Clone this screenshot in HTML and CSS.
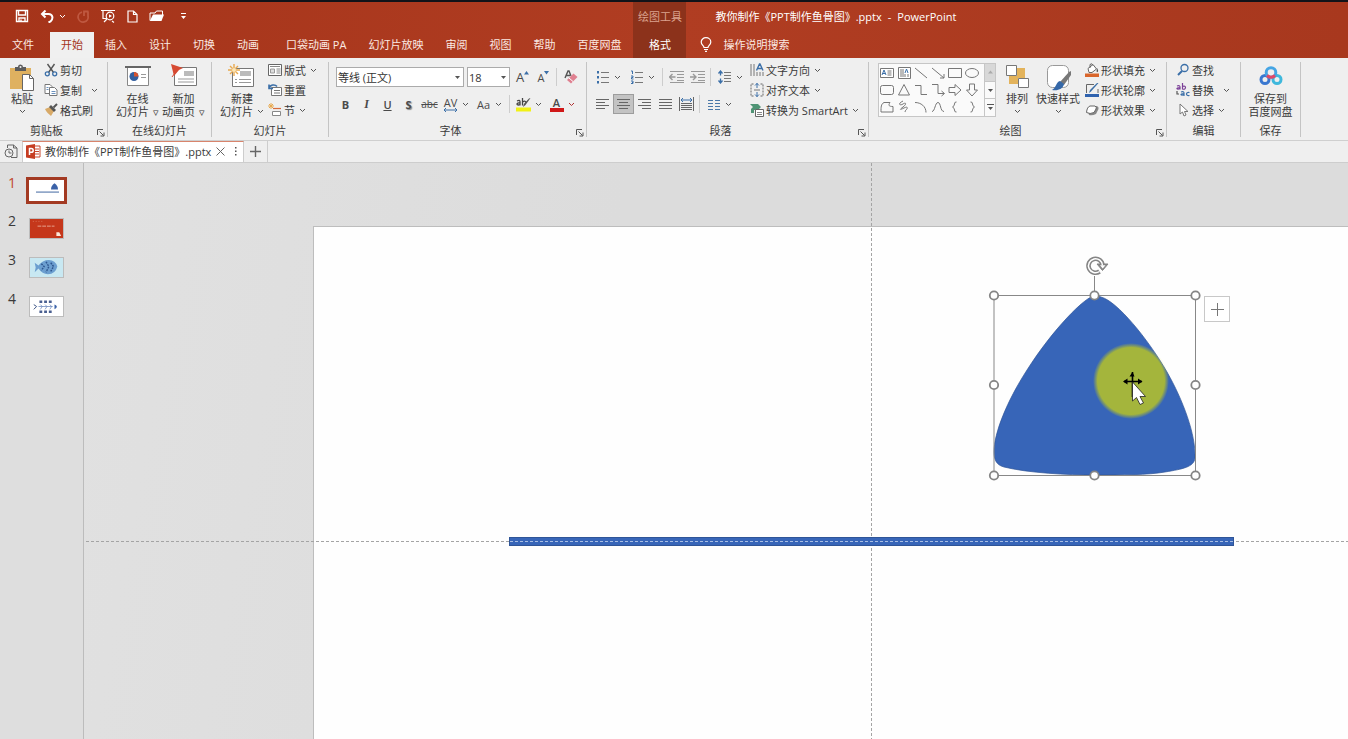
FILE: index.html
```html
<!DOCTYPE html>
<html lang="zh-CN">
<head>
<meta charset="utf-8">
<title>教你制作《PPT制作鱼骨图》.pptx - PowerPoint</title>
<link rel="stylesheet" href="styles.css">
</head>
<body>
<svg class="defs" aria-hidden="true">
  <symbol id="chev" viewBox="0 0 7 5"><path d="M1 1l2.500 2.500L6 1" fill="none" stroke="currentColor"/></symbol>
  <symbol id="tri" viewBox="0 0 7 5"><path d="M1 1h5L3.500 4z" fill="#555"/></symbol>
  <symbol id="launch" viewBox="0 0 9 9"><path d="M1.500 7V1.500H7M3.500 3.500l4 4M8 4.500V8H4.500" fill="none" stroke="#555"/></symbol>
</svg>
<header class="header">
  <div class="qat">
    <button aria-label="保存"><svg width="14" height="14" viewBox="0 0 14 14" fill="none" stroke="#fff" stroke-width="1.400"><path d="M1.500 1.500h11v11h-11zM3.500 1.500v4.500h7V1.500M4 12.500V9h6v3.500M6 12.500v-2"/></svg></button>
    <button aria-label="撤消" class="undo"><svg width="14" height="13" viewBox="0 0 14 13" fill="none" stroke="#fff" stroke-width="2"><path d="M5.500 0.500L2 4L5.500 7.500M2 4h6.500c4.500 0 5 5 2 7.500L8.500 12.500"/></svg><svg class="chev"><use href="#chev"/></svg></button>
    <button aria-label="重做" class="dim"><svg width="13" height="13" viewBox="0 0 13 13" fill="none" stroke="#d0705a" stroke-width="1.800"><path d="M5 2.200A5 5 0 1 0 11 6V1.500M11.500 1.500H7V6"/></svg></button>
    <button aria-label="从头开始"><svg width="15" height="14" viewBox="0 0 15 14" fill="none" stroke="#fff" stroke-width="1.200"><path d="M0 1.500h14M2 1.500v8h4M3 13l3-3M11 12l2 1.500"/><circle cx="9" cy="7" r="3.800"/><path d="M8 5.200v3.600L11 7z" fill="#fff" stroke="none"/></svg></button>
    <button aria-label="新建"><svg width="11" height="13" viewBox="0 0 11 13" fill="none" stroke="#fff" stroke-width="1.200"><path d="M1 1h5.500L10 4.500V12H1zM6.500 1v3.500H10"/></svg></button>
    <button aria-label="打开"><svg width="15" height="12" viewBox="0 0 15 12" fill="#fff"><path d="M1 10.500V3h5l1.500-2h6v4" fill="none" stroke="#fff"/><path d="M4 4.500h11L12.500 11H0.800z"/></svg></button>
    <button aria-label="自定义快速访问工具栏"><svg width="7" height="7" viewBox="0 0 7 7" fill="#fff"><path d="M1 0h5v1H1zM1 3h5L3.500 6z"/></svg></button>
  </div>
  <nav class="tabs">
    <button class="file">文件</button><button class="on">开始</button><button>插入</button><button>设计</button><button>切换</button><button>动画</button><button class="addin">口袋动画 PA</button><button>幻灯片放映</button><button>审阅</button><button>视图</button><button>帮助</button><button>百度网盘</button>
  </nav>
  <div class="context"><span>绘图工具</span><button>格式</button></div>
  <h1 class="title"><span>教你制作《PPT制作鱼骨图》.pptx</span><span>-</span><span>PowerPoint</span></h1>
  <button class="tellme"><svg width="12" height="15" viewBox="0 0 12 15" fill="none" stroke="#fff" stroke-width="1.200"><path d="M4 10.500C4 8.500 1.200 8 1.200 5a4.800 4.300 0 0 1 9.600 0C10.800 8 8 8.500 8 10.500zM4 12.500h4M5 14.300h2"/></svg>操作说明搜索</button>
</header>

<main class="ribbon">
  <section class="group clip">
    <div class="body">
      <button class="big paste"><svg width="26" height="28" viewBox="0 0 26 28"><rect x="1" y="4" width="21" height="21" fill="#dfb160"/><path d="M6 3h3a2.500 2.500 0 0 1 5 0h3v4H6z" fill="#5c5c5c"/><circle cx="11.500" cy="3" r="1" fill="#eee"/><path d="M13.500 10.500h7l4 4v12h-11z" fill="#fff" stroke="#666"/><path d="M20.500 10.500v4h4" fill="none" stroke="#666"/></svg><span>粘贴</span><svg class="chev"><use href="#chev"/></svg></button>
      <div class="stack">
        <button><svg width="14" height="14" viewBox="0 0 14 14" fill="none"><path d="M3.500 1l6 8.500M10.500 1l-6 8.500" stroke="#555" stroke-width="1.400"/><circle cx="3.300" cy="10.800" r="2" stroke="#3b6fa8" stroke-width="1.300"/><circle cx="10.700" cy="10.800" r="2" stroke="#3b6fa8" stroke-width="1.300"/></svg>剪切</button>
        <button class="wide"><svg width="14" height="14" viewBox="0 0 14 14" fill="#fff" stroke="#777"><path d="M1 1.500h5l2 2v7H1z"/><path d="M5.500 4.500h5l2.500 2.500v5.500h-7.500z"/><path d="M2.500 4.500h2M2.500 6.500h2M7.500 8.500h4M7.500 10.500h4" stroke="#6a90bd"/></svg>复制<svg class="chev"><use href="#chev"/></svg></button>
        <button><svg width="14" height="14" viewBox="0 0 14 14"><path d="M1 6l5-2 4 4-3 5C5 11 2 9 1 6z" fill="#d8aa68"/><path d="M5 4l2-2 5 5-2 2z" fill="#555"/><path d="M9.500 4.500L13 1" stroke="#555" stroke-width="2"/></svg>格式刷</button>
      </div>
    </div>
    <footer><span>剪贴板</span><button class="launch" aria-label="剪贴板选项"><svg width="9" height="9"><use href="#launch"/></svg></button></footer>
  </section>

  <section class="group online">
    <div class="body">
      <button class="big"><svg width="28" height="28" viewBox="0 0 28 28"><path d="M1 3h26" stroke="#666" stroke-width="2"/><path d="M3.500 4v17.500h21V4" fill="#fff" stroke="#888"/><circle cx="10" cy="12.500" r="4.500" fill="#345f9f"/><path d="M10 8v4.500h4.500A4.500 4.500 0 0 0 10 8" fill="#d9552f"/><path d="M17 10.500h5M17 13.500h5" stroke="#999"/></svg><span>在线</span><span>幻灯片 <i>▿</i></span></button>
      <button class="big"><svg width="28" height="28" viewBox="0 0 28 28"><path d="M4.500 3.500h22v18h-22z" fill="#fff" stroke="#777"/><path d="M14 7h10v5H14z" fill="#bbb"/><path d="M8 15h16M8 18h16" stroke="#999"/><path d="M1 0l12 4-4 2-5 6z" fill="#d64a32"/><path d="M5 9l-3 4" stroke="#d64a32"/></svg><span>新加</span><span>动画页 <i>▿</i></span></button>
    </div>
    <footer><span>在线幻灯片</span></footer>
  </section>

  <section class="group slides">
    <div class="body">
      <button class="big"><svg width="28" height="28" viewBox="0 0 28 28"><path d="M4.500 4.500h21v18h-21z" fill="#fff" stroke="#777"/><path d="M12 7h11v5H12z" fill="#bbb"/><path d="M7 15.500h2m2 0h12M7 18.500h2m2 0h12" stroke="#999"/><path d="M6 0v12M0 6h12M2 2l8 8M10 2l-8 8" stroke="#e8a94e" stroke-width="1.400"/><circle cx="6" cy="6" r="2" fill="#fbe6b8"/></svg><span>新建</span><span>幻灯片 <svg class="chev"><use href="#chev"/></svg></span></button>
      <div class="stack">
        <button><svg width="14" height="14" viewBox="0 0 14 14" fill="#fff" stroke="#666"><path d="M0.500 1.500h13v11H0.500z"/><path d="M2 3.500h10M8.500 6h4M8.500 8h4M8.500 10h4" stroke="#888"/><path d="M2.500 6h4v4h-4z" fill="#ddd" stroke="#999"/></svg>版式<svg class="chev"><use href="#chev"/></svg></button>
        <button><svg width="14" height="14" viewBox="0 0 14 14" fill="#fff" stroke="#777"><path d="M3.500 4.500h10v8h-10z"/><path d="M6 7.500h6M6 10h6"/><path d="M1 5.500C2 1.500 7 1 9 3.500M1 1.500v4h4" fill="none" stroke="#3b6fa8" stroke-width="1.600"/></svg>重置</button>
        <button><svg width="14" height="14" viewBox="0 0 14 14" fill="#fff" stroke="#888"><path d="M4.500 8.500h8v4h-8z"/><path d="M5 5.500h8" stroke="#d66a3a" stroke-width="1.200"/><path d="M3 0v6M0 3h6M1 1l4 4M5 1L1 5" stroke="#e8a94e"/></svg>节<svg class="chev"><use href="#chev"/></svg></button>
      </div>
    </div>
    <footer><span>幻灯片</span></footer>
  </section>

  <section class="group font">
    <div class="rows">
      <div class="row combos">
        <div class="combo name"><select aria-label="字体"><option>等线 (正文)</option></select><svg width="7" height="5"><use href="#tri"/></svg></div>
        <div class="combo size"><select aria-label="字号"><option>18</option></select><svg width="7" height="5"><use href="#tri"/></svg></div>
        <button class="tool grow" aria-label="增大字号"><b>A</b><svg width="5" height="4" viewBox="0 0 5 4"><path d="M0 3.500L2.500 0 5 3.500z" fill="#3b6fa8"/></svg></button>
        <button class="tool shrink" aria-label="减小字号"><b>A</b><svg width="5" height="4" viewBox="0 0 5 4"><path d="M0 0h5L2.500 3.500z" fill="#3b6fa8"/></svg></button>
        <i class="sep"></i>
        <button class="tool" aria-label="清除所有格式"><svg width="14" height="15" viewBox="0 0 14 15"><path d="M1 8l3-7h1l2 5M2.500 5.500H6" fill="none" stroke="#555" stroke-width="1.400"/><path d="M3 10L9.500 3.500l4 3.500-6.500 6.500z" fill="#df8090"/><path d="M5 8l4 3.500" stroke="#fff"/></svg></button>
      </div>
      <div class="row">
        <button class="tool"><b>B</b></button><button class="tool italic"><em>I</em></button><button class="tool under"><u>U</u></button><button class="tool shadow">S</button><button class="tool strike">abc</button>
        <button class="tool" aria-label="字符间距"><svg class="ic" width="15" height="4" viewBox="0 0 15 4"><path d="M1 2h13M3 0L1 2l2 2M12 0l2 2-2 2" fill="none" stroke="#3b6fa8"/></svg><span class="av">AV</span></button><button class="drop" aria-label="字符间距选项"><svg class="chev"><use href="#chev"/></svg></button>
        <button class="tool next aa">Aa</button><button class="drop" aria-label="更改大小写选项"><svg class="chev"><use href="#chev"/></svg></button>
        <i class="sep near"></i>
        <button class="tool" aria-label="突出显示"><svg width="15" height="15" viewBox="0 0 15 15"><path d="M0 10.500h15V14.500H0z" fill="#f1f116"/><path d="M1 4q3-1.500 3 .8V8.500M4 6C0 5.200 0 9.200 4 7.600M6.500 1v7.500M6.500 5q3.500-2 3.500 1" fill="none" stroke="#444" stroke-width="1.300"/><path d="M14.500 1L9.500 8l-2.500 2 .8-3L13 1.500z" fill="#555"/></svg></button><button class="drop" aria-label="突出显示颜色"><svg class="chev"><use href="#chev"/></svg></button>
        <button class="tool next color"><b>A</b></button><button class="drop red" aria-label="字体颜色选项"><svg class="chev"><use href="#chev"/></svg></button>
      </div>
    </div>
    <footer><span>字体</span><button class="launch" aria-label="字体选项"><svg width="9" height="9"><use href="#launch"/></svg></button></footer>
  </section>

  <section class="group para">
    <div class="body">
      <div class="rows">
        <div class="row">
          <button class="tool" aria-label="项目符号"><svg width="12" height="14" viewBox="0 0 12 14"><path d="M4 2.500h8M4 7.500h8M4 12.500h8" stroke="#777"/><path d="M0 1h2v2.500H0zM0 6h2v2.500H0zM0 11h2v2.500H0z" fill="#3b6fa8"/></svg></button><button class="drop" aria-label="项目符号选项"><svg class="chev"><use href="#chev"/></svg></button>
          <button class="tool next" aria-label="编号"><svg width="12" height="14" viewBox="0 0 12 14" fill="none"><path d="M4 2.500h8M4 7.500h8M4 12.500h8" stroke="#777"/><path d="M0 1h1.500v3M0 6h2v1.500H0.500V9h2M0 11h2v2.500H0M1 12.500h1" stroke="#3b6fa8"/></svg></button><button class="drop" aria-label="编号选项"><svg class="chev"><use href="#chev"/></svg></button>
          <i class="sep"></i>
          <button class="tool" aria-label="降低列表级别"><svg width="15" height="12" viewBox="0 0 15 12" fill="none" stroke="#999"><path d="M1 0.500h14M8 3.500h7M8 6.500h7M8 9.500h7M1 11.500h14"/><path d="M0.500 6h6M3.500 3l-3 3 3 3" stroke-width="1.400"/></svg></button>
          <button class="tool" aria-label="提高列表级别"><svg width="15" height="12" viewBox="0 0 15 12" fill="none" stroke="#999"><path d="M1 0.500h14M8 3.500h7M8 6.500h7M8 9.500h7M1 11.500h14"/><path d="M0 6h6M3 3l3 3-3 3" stroke-width="1.400"/></svg></button>
          <i class="sep tight"></i>
          <button class="tool" aria-label="行距"><svg width="13" height="14" viewBox="0 0 13 14" fill="none"><path d="M6 2.500h7M6 5.500h7M6 8.500h7M6 11.500h7" stroke="#777"/><path d="M2.500 1v4.500M2.500 8.500V13M0.500 3.500l2-2.500 2 2.500M0.500 10.500l2 2.500 2-2.500" stroke="#3b6fa8" stroke-width="1.300"/></svg></button><button class="drop" aria-label="行距选项"><svg class="chev"><use href="#chev"/></svg></button>
        </div>
        <div class="row">
          <button class="tool" aria-label="左对齐"><svg width="13" height="12" viewBox="0 0 13 12" stroke="#666"><path d="M0 1.500h13M0 4.500h9M0 7.500h13M0 10.500h9"/></svg></button>
          <button class="tool pressed" aria-label="居中"><svg width="13" height="12" viewBox="0 0 13 12" stroke="#666"><path d="M0 1.500h13M2 4.500h9M0 7.500h13M2 10.500h9"/></svg></button>
          <button class="tool" aria-label="右对齐"><svg width="13" height="12" viewBox="0 0 13 12" stroke="#666"><path d="M0 1.500h13M4 4.500h9M0 7.500h13M4 10.500h9"/></svg></button>
          <button class="tool" aria-label="两端对齐"><svg width="13" height="12" viewBox="0 0 13 12" stroke="#666"><path d="M0 1.500h13M0 4.500h13M0 7.500h13M0 10.500h13"/></svg></button>
          <button class="tool" aria-label="分散对齐"><svg width="15" height="14" viewBox="0 0 15 14" fill="none"><path d="M0.500 0v14M14.500 0v14M2 6.500h11M2 8.500h11M2 10.500h11M2 12.500h11" stroke="#666"/><path d="M2 3h11M4 1L2 3l2 2M11 1l2 2-2 2" stroke="#3b6fa8"/></svg></button>
          <i class="sep tight"></i>
          <button class="tool" aria-label="分栏"><svg width="12" height="11" viewBox="0 0 12 11" stroke="#4a78a8"><path d="M0 1.500h5M7 1.500h5M0 4.500h5M7 4.500h5M0 7.500h5M7 7.500h5M0 10.500h5M7 10.500h5"/></svg></button><button class="drop" aria-label="分栏选项"><svg class="chev"><use href="#chev"/></svg></button>
        </div>
      </div>
      <div class="stack">
        <button><svg width="14" height="14" viewBox="0 0 14 14" fill="none"><path d="M1 1v12M4 1v12M7 9v4M10 9v4M13 9v4" stroke="#777"/><path d="M6.500 7.500l3-6.500h.5l3 6.500M7.500 5.500h4.500" stroke="#3b6fa8" stroke-width="1.400"/></svg>文字方向<svg class="chev"><use href="#chev"/></svg></button>
        <button><svg width="14" height="14" viewBox="0 0 14 14" fill="none"><path d="M3.500 1H1v12h2.500M10.500 1H13v12h-2.500" stroke="#666" stroke-dasharray="2 1"/><path d="M4 7h6" stroke="#777"/><path d="M7 0v5M5 2.500L7 .5l2 2M7 9v5M5 11.500l2 2 2-2" stroke="#3b6fa8"/></svg>对齐文本<svg class="chev"><use href="#chev"/></svg></button>
        <button><svg width="14" height="14" viewBox="0 0 14 14"><path d="M0 1h8l3 3-3 3H4v3H1V6l2-2z" fill="#4f9475"/><path d="M5.500 6.500h8v7h-8z" fill="#fff" stroke="#666"/><path d="M7 9.500h5M7 11.500h5" stroke="#888"/></svg>转换为 SmartArt<svg class="chev"><use href="#chev"/></svg></button>
      </div>
    </div>
    <footer><span>段落</span><button class="launch" aria-label="段落选项"><svg width="9" height="9"><use href="#launch"/></svg></button></footer>
  </section>

  <section class="group draw">
    <div class="body">
      <div class="gallery">
        <div class="shapes">
          <svg viewBox="0 0 16 16"><path d="M1.500 3.500h13v9h-13z" fill="#fff"/><path d="M3 10l2-5 2 5M3.500 8.500h3" stroke="#3b6fa8"/><path d="M8.500 6h4M8.500 8h4M8.500 10h4"/></svg>
          <svg viewBox="0 0 16 16"><path d="M2.500 2.500h12v11h-12z" fill="#fff"/><path d="M5 4v8M7 4v8M9 9v3M12 9v3"/><path d="M9 8l1.500-4L12 8" stroke="#3b6fa8"/></svg>
          <svg viewBox="0 0 16 16"><path d="M2 3l12 10"/></svg>
          <svg viewBox="0 0 16 16"><path d="M2 3l12 10M14 9v4h-4"/></svg>
          <svg viewBox="0 0 16 16"><path d="M1.500 3.500h13v9h-13z"/></svg>
          <svg viewBox="0 0 16 16"><ellipse cx="8" cy="8" rx="6.500" ry="4.500"/></svg>
          <svg viewBox="0 0 16 16"><rect x="1.500" y="3.500" width="13" height="9" rx="2"/></svg>
          <svg viewBox="0 0 16 16"><path d="M8 2.500l5.500 10.500h-11z"/></svg>
          <svg viewBox="0 0 16 16"><path d="M2 3.500h6v9h6"/></svg>
          <svg viewBox="0 0 16 16"><path d="M2 2.500h6v9h6M11.500 9l3 2.500-3 2.500"/></svg>
          <svg viewBox="0 0 16 16"><path d="M2 5.500h6v-3l6 5.500-6 5.500v-3H2z"/></svg>
          <svg viewBox="0 0 16 16"><path d="M5.500 2v6h-3L8 14l5.500-6h-3V2z"/></svg>
          <svg viewBox="0 0 16 16"><path d="M5 3.500h6c-2 3-1 4 3 4v5.500H2c0-5 0-8 3-9.500z"/></svg>
          <svg viewBox="0 0 16 16"><path d="M7 2C1 5 4 7 7 5s4 0 0 3-3 3 1 1 4 0 2 2 0 2-1 1"/></svg>
          <svg viewBox="0 0 16 16"><path d="M2 3.500c6 0 11 4 11 10"/></svg>
          <svg viewBox="0 0 16 16"><path d="M2 12.500c3 0 3-9 6-9s2 9 6 9"/></svg>
          <svg viewBox="0 0 16 16"><path d="M9.500 3H9q-1.500 0-1.500 2t-2 3q2 1 2 3T9 13h.5"/></svg>
          <svg viewBox="0 0 16 16"><path d="M6.500 3H7q1.500 0 1.500 2t2 3q-2 1-2 3T7 13h-.5"/></svg>
        </div>
        <div class="scroll"><button class="off" aria-label="上一行"><svg width="5" height="4" viewBox="0 0 5 4"><path d="M0 3.500L2.500 0.500 5 3.500z" fill="#aaa"/></svg></button><button aria-label="下一行"><svg width="7" height="5"><use href="#tri"/></svg></button><button aria-label="更多形状"><svg width="7" height="7" viewBox="0 0 7 7" fill="#555"><path d="M0 0h7v1H0zM1 3h5L3.500 6z"/></svg></button></div>
      </div>
      <button class="big"><svg width="26" height="28" viewBox="0 0 26 28"><path d="M13 4h8v10h-8zM5 12h9v8H5z" fill="#e3b35b"/><path d="M2.500 1.500h10v10h-10zM14.500 14.500h10v9h-10z" fill="#fff" stroke="#777"/></svg><span>排列</span><svg class="chev"><use href="#chev"/></svg></button>
      <button class="big"><svg width="28" height="28" viewBox="0 0 28 28"><rect x="3.500" y="1.500" width="21" height="22" rx="5" fill="#fff" stroke="#999"/><path d="M27 7v4L20 21l-4-3 9-10z" fill="#777"/><path d="M16 17l4 3c-1 5-6 7-12 6 4-2 4-8 8-9z" fill="#3568a8"/></svg><span>快速样式</span><svg class="chev"><use href="#chev"/></svg></button>
      <div class="stack">
        <button><svg width="14" height="14" viewBox="0 0 14 14"><path d="M0 10.500h14V14H0z" fill="#d9662c"/><path d="M3 5.500L8 1.500l3.500 4.500L7 9.500H4z" fill="#fff" stroke="#666"/><path d="M5 5V1.500q2-2 3 1" fill="none" stroke="#666"/><path d="M12 5q2 3 .5 4T12 5" fill="#555"/></svg>形状填充<svg class="chev"><use href="#chev"/></svg></button>
        <button><svg width="14" height="14" viewBox="0 0 14 14"><path d="M0 11h14v3H0z" fill="#2f62ae"/><path d="M9 1.500H1.500V10M13 6v4" fill="none" stroke="#666"/><path d="M13.500 0L6 8.500 4 10l1-3L12 0z" fill="#3b6fa8"/></svg>形状轮廓<svg class="chev"><use href="#chev"/></svg></button>
        <button><svg width="14" height="14" viewBox="0 0 14 14"><path d="M3 8l3-5h6q2 1 1.500 3L11 11q-4 2-7 1z" fill="#888"/><path d="M1.500 9.500Q2 4 5 3h5q2 1 1 3L9 9.500q-4 2-7.500 0z" fill="#fff" stroke="#666"/></svg>形状效果<svg class="chev"><use href="#chev"/></svg></button>
      </div>
    </div>
    <footer><span>绘图</span><button class="launch" aria-label="绘图选项"><svg width="9" height="9"><use href="#launch"/></svg></button></footer>
  </section>

  <section class="group edit">
    <div class="body"><div class="stack">
      <button><svg width="14" height="14" viewBox="0 0 14 14" fill="none" stroke="#3b6fa8"><circle cx="8.500" cy="5" r="3.500" stroke-width="1.300"/><path d="M6 8l-4 4" stroke-width="2"/></svg>查找</button>
      <button class="wide"><svg width="14" height="14" viewBox="0 0 14 14" fill="none" stroke-width="1.200"><path d="M1 3q3-1 3 1v2.500M4 4.500c-5 0-3 3 0 1M6.500 0v6.500M6.500 3.500c4-2 4 4 0 2.500" stroke="#7b3f98"/><path d="M5 9q3-1 3 1v3M8 10.500c-5 0-3 3 0 1M13.500 9.500c-4-1-4 4 0 3" stroke="#3b6fa8"/><path d="M1 8v3h2" stroke="#555"/></svg>替换<svg class="chev"><use href="#chev"/></svg></button>
      <button><svg width="14" height="14" viewBox="0 0 14 14" fill="#fff" stroke="#777"><path d="M4 1v10l2.500-2 1.500 4 2-1-1.500-3.500H12z"/></svg>选择<svg class="chev"><use href="#chev"/></svg></button>
    </div></div>
    <footer><span>编辑</span></footer>
  </section>

  <section class="group save">
    <div class="body">
      <button class="big"><svg width="24" height="28" viewBox="0 0 24 28" fill="none" stroke-width="3"><circle cx="6" cy="15.500" r="4" stroke="#3a78d0"/><circle cx="18" cy="15.500" r="4" stroke="#3fb8dc"/><circle cx="12" cy="8.500" r="4.800" stroke="#45a5e4"/><path d="M8 11.500q4 3.500 8 0" stroke="#e04868"/></svg><span>保存到</span><span>百度网盘</span></button>
    </div>
    <footer><span>保存</span></footer>
  </section>
</main>

<div class="docbar">
  <button class="recent" aria-label="最近文档"><svg width="14" height="15" viewBox="0 0 14 15" fill="none" stroke="#666"><path d="M3.500 4V1h6l3.500 3v9.500H7M9.500 1v3H13"/><circle cx="5" cy="9" r="4"/><path d="M5 6.500V9h2.500"/></svg></button>
  <div class="doc">
    <svg width="15" height="15" viewBox="0 0 15 15"><path d="M7 2h7v11H7z" fill="#fff" stroke="#c8472c"/><path d="M9 5h4M9 7.500h4M9 10h4" stroke="#c8472c"/><path d="M0 1.500L9 0v15L0 13.500z" fill="#c63d22"/><path d="M3.500 11V4.500h1.800a1.900 1.900 0 0 1 0 3.800H3.500" fill="none" stroke="#fff" stroke-width="1.500"/></svg>
    <span>教你制作《PPT制作鱼骨图》.pptx</span>
    <button aria-label="关闭"><svg width="9" height="9" viewBox="0 0 9 9" stroke="#666"><path d="M0.500 0.500l8 8M8.500 0.500l-8 8"/></svg></button>
    <button class="more" aria-label="更多"><svg width="3" height="11" viewBox="0 0 3 11" fill="#555"><path d="M1 1h1.500v1.500H1zM1 4.500h1.500V6H1zM1 8h1.500v1.500H1z"/></svg></button>
  </div>
  <button class="add" aria-label="新建标签"><svg width="11" height="11" viewBox="0 0 11 11" stroke="#666" stroke-width="1.400"><path d="M5.500 0v11M0 5.500h11"/></svg></button>
</div>

<div class="work">
  <aside class="thumbs">
    <button class="thumb cur"><span>1</span><svg viewBox="0 0 35 20" preserveAspectRatio="none"><path d="M0 0h35v20H0z" fill="#fff"/><path d="M7 11.500h23" stroke="#4a6ea5" stroke-width="1"/><path d="M22 9q0-4 3.500-6Q29 5 29 9z" fill="#3b62a8"/></svg></button>
    <button class="thumb"><span>2</span><svg viewBox="0 0 35 20" preserveAspectRatio="none"><path d="M0 0h35v20H0z" fill="#c5371b"/><path d="M8 7.500h18" stroke="#e9a893" stroke-dasharray="4 1"/><path d="M3 2.500h10" stroke="#d8745a" stroke-dasharray="1 2"/><path d="M28 14h3l2 4h-5z" fill="#fbe7d8"/></svg></button>
    <button class="thumb"><span>3</span><svg viewBox="0 0 35 20" preserveAspectRatio="none"><path d="M0 0h35v20H0z" fill="#c8e8f2"/><path d="M5 5l4 3q4-6 11-6t9 7q-2 8-10 8-6 0-10-6l-4 4 1-5z" fill="#6c9fd0"/><path d="M12 6l3 3-3 4M17 4l3 5-3 6M22 5l3 4-3 5" fill="none" stroke="#2e568f" stroke-width="1.500" stroke-dasharray="2 1"/></svg></button>
    <button class="thumb"><span>4</span><svg viewBox="0 0 35 20" preserveAspectRatio="none"><path d="M0 0h35v20H0z" fill="#fff"/><path d="M4 8l3 2-3 3" fill="none" stroke="#334c80"/><path d="M26 8q5 2 0 5z" fill="#3b62a8"/><path d="M10 5h13M10 15.500h13" stroke="#4a5f90" stroke-width="2.500" stroke-dasharray="3 2"/><path d="M9 10h15M11 8l2 2-2 3M16 8l2 2-2 3M21 8l2 2-2 3" fill="none" stroke="#6a88bd" stroke-width=".8"/></svg></button>
  </aside>
  <div class="canvas">
    <div class="slide"></div>
    <i class="guide-v"></i>
    <i class="guide-h"></i>
    <div class="bar"></div>
    <svg class="shape" width="202" height="181" viewBox="0 0 202 181">
      <defs>
        <path id="tripath" d="M101 1C92 2 60 34 34 75C14 106 1 138 1 157C1 164 3 170 11 172C35 178 75 180 101 180C130 180 155 180 172 177C190 174 201 172 202 163C203 140 190 105 174 77C155 44 124 6 108 2Q104 0 101 1Z"/>
        <clipPath id="clip"><use href="#tripath"/></clipPath>
        <radialGradient id="spot"><stop offset=".88" stop-color="#a4b53c"/><stop offset="1" stop-color="#a4b53c" stop-opacity="0"/></radialGradient>
        <radialGradient id="glow"><stop offset=".8" stop-color="#f4f79a"/><stop offset="1" stop-color="#f4f79a" stop-opacity="0"/></radialGradient>
      </defs>
      <circle cx="138" cy="86" r="38" fill="url(#glow)"/>
      <use href="#tripath" fill="#3765b8" stroke="#2f5597" stroke-width=".7"/>
      <circle cx="138" cy="86" r="38" fill="url(#spot)" clip-path="url(#clip)"/>
      <path d="M1 .5h201.500v180H1zM101.500 0v-19" fill="none" stroke="#888"/>
      <g fill="#fff" stroke="#858585" stroke-width="1.800"><circle cx="1" cy="0.500" r="4.200"/><circle cx="101.500" cy="0.500" r="4.200"/><circle cx="202.500" cy="0.500" r="4.200"/><circle cx="1" cy="90" r="4.200"/><circle cx="202.500" cy="90" r="4.200"/><circle cx="1" cy="180.500" r="4.200"/><circle cx="101.500" cy="180.500" r="4.200"/><circle cx="202.500" cy="180.500" r="4.200"/></g>
      <path d="M106.500-23.500A7 7 0 1 1 109.500-29.500" fill="none" stroke="#858585" stroke-width="4.600"/>
      <path d="M104-31h11l-5.500 6.500z" fill="#858585" stroke="#858585"/>
      <path d="M106.500-23.500A7 7 0 1 1 109.500-29.500" fill="none" stroke="#fff" stroke-width="1.500"/>
      <path d="M107-29.700h5.500l-2.800 3.200z" fill="#fff"/>
      <path d="M139.500 77v25M131 86.500h18" stroke="#000" stroke-width="1.600"/>
      <path d="M136.500 81.500l3-4.500 2 4.500zM134.500 83.500v6l-4.500-3zM145 83.500v6l4.500-3z" fill="#000"/>
      <path d="M139.500 87v19l4-3.500 3.500 7 3.500-1.500-3.500-6.500h5.500z" fill="#fff" stroke="#222" stroke-width=".8"/>
    </svg>
    <button class="plus" aria-label="添加"><svg width="13" height="13" viewBox="0 0 13 13" stroke="#777"><path d="M6.500 0v13M0 6.500h13"/></svg></button>
  </div>
</div>
</body>
</html>
```
FILE: styles.css
```css
* { box-sizing: border-box; }
html, body { height: 100%; margin: 0; }
body {
  display: flex;
  flex-direction: column;
  overflow: hidden;
  background: #dedede;
  color: #3a3a3a;
  font: 11px/13px "Open Sans", "Noto Sans CJK SC", sans-serif;
}
button {
  display: flex;
  align-items: center;
  justify-content: center;
  margin: 0;
  padding: 0;
  border: 0;
  background: none;
  color: inherit;
  font: inherit;
  white-space: nowrap;
}
svg { flex: none; }
i { font-style: normal; }
.defs { position: absolute; width: 0; height: 0; }
.chev { width: 7px; height: 5px; color: #555; }

/* title bar and tabs */
.header {
  display: grid;
  grid-template: 28px 28px / auto auto 1fr;
  flex: none;
  border-top: 2px solid #111319;
  background: linear-gradient(90deg, #a5341a, #b03d22 50%, #a8381e);
  color: #fbe9e2;
}
.qat { display: flex; align-items: center; gap: 11px; padding-left: 15px; }
.qat .undo { gap: 5px; }
.qat .chev { color: #fff; }
.qat .dim { opacity: .6; }
.qat button:last-child { margin-left: 5px; }
.tabs { grid-row: 2; display: flex; padding-right: 1px; }
.tabs button { padding: 0 11px; }
.tabs .file { padding: 0 16px 0 12px; }
.tabs .on { margin-top: 2px; padding-bottom: 2px; background: #f0f0f0; color: #a5351c; }
.tabs .addin { margin-left: 5px; }
.context {
  grid-area: 1 / 2 / 3 / 3;
  display: grid;
  grid-template-rows: 28px 28px;
  align-items: center;
  justify-items: center;
  width: 53px;
  background: #8c321b;
}
.context span { color: #dba28f; }
.context button { color: #fff; }
.title {
  grid-area: 1 / 3;
  display: flex;
  align-items: center;
  gap: 6px;
  margin: 0;
  padding-left: 29px;
  color: #fff;
  font: inherit;
  white-space: nowrap;
}
.tellme { grid-area: 2 / 3; justify-self: start; gap: 11px; padding-left: 14px; }

/* ribbon */
.ribbon {
  display: flex;
  flex: none;
  border-bottom: 1px solid #cfcfcf;
  background: #efefef;
}
.group { position: relative; display: flex; flex-direction: column; flex: none; padding: 2px 1px 0 0; }
.group::after {
  content: "";
  position: absolute;
  top: 4px;
  right: 0;
  bottom: 3px;
  width: 1px;
  background: #c4c4c4;
}
.body { display: flex; height: 60px; }
.group footer { display: flex; align-items: center; height: 20px; }
.group footer span { flex: 1; text-align: center; }
.launch { align-self: flex-end; width: 14px; height: 15px; }
.big { flex-direction: column; justify-content: flex-start; padding-top: 4px; }
.big span { display: flex; align-items: center; gap: 4px; }
.big > .chev { margin-top: 4px; }
.stack { display: flex; flex-direction: column; }
.stack button { justify-content: flex-start; gap: 2px; height: 20px; }
.stack .chev { margin-left: 2px; }
.stack .wide .chev { margin-left: 7px; }

.clip { width: 108px; }
.clip .paste { width: 44px; }
.online { width: 104px; }
.online .body { gap: 3px; padding-left: 8px; }
.slides { width: 117px; }
.slides .body { gap: 4px; padding-left: 8px; }
.font { width: 258px; }
.para { width: 282px; }
.draw { width: 298px; }
.edit { width: 74px; }
.edit .body { padding-left: 9px; }
.save { width: 60px; }
.save .body { justify-content: center; }

.rows { display: flex; flex-direction: column; gap: 7px; height: 60px; padding: 7px 0 0 6px; }
.row { display: flex; align-items: center; height: 20px; }
.tool { position: relative; width: 21px; height: 20px; color: #4a4a4a; }
.tool.next { margin-left: 3px; }
.drop { width: 9px; height: 20px; }
.red .chev { color: #b03030; }
.sep { width: 1px; height: 18px; margin: 0 3px 0 6px; background: #cdcdcd; }
.sep.tight { margin-left: 2px; }
.pressed { border: 1px solid #9d9d9d; background: #c3c3c3; }
.combo { position: relative; margin-right: 3px; }
.combo select {
  width: 100%;
  height: 20px;
  padding: 0 1px;
  border: 1px solid #ababab;
  border-radius: 0;
  appearance: none;
  background: #fff;
  color: #333;
  font: inherit;
}
.combo svg { position: absolute; top: 8px; right: 3px; pointer-events: none; }
.combos { padding-left: 1px; }
.name { width: 128px; }
.size { width: 43px; margin-right: 2px; }
.grow b { font-weight: 400; font-size: 13px; }
.shrink b { font-weight: 400; font-size: 11px; }
.grow svg, .shrink svg { align-self: flex-start; margin-top: 4px; }
.combos .sep { margin: 0 3px 0 2px; }
.italic { font-family: "Liberation Serif", serif; font-size: 12px; font-weight: 700; }
.under { font-weight: 600; }
.shadow { font-weight: 700; text-shadow: 1px 1px 1px #888; }
.strike { font-size: 10px; text-decoration: line-through; }
.av { padding-bottom: 3px; }
.tool .ic { position: absolute; left: 3px; bottom: 2px; }
.color b { width: 14px; height: 15px; border-bottom: 4px solid #d01818; font-weight: 600; line-height: 11px; text-align: center; }
.para .rows { padding-left: 5px; }
.para .next { margin-left: 4px; }
.para .stack { margin-left: 6px; }

.gallery {
  display: flex;
  height: 54px;
  margin: 3px 8px 0 9px;
  border: 1px solid #c6c6c6;
  background: #fafafa;
}
.shapes { display: grid; grid-template-columns: repeat(6, 17px); align-items: center; padding-right: 3px; }
.shapes svg { width: 16px; height: 16px; fill: none; stroke: #777; }
.scroll { display: flex; flex-direction: column; width: 11px; border-left: 1px solid #c6c6c6; }
.scroll button { flex: 1; border-bottom: 1px solid #c6c6c6; }
.scroll button:last-child { border-bottom: 0; }
.scroll .off { background: #d8d8d8; }
.draw .big + .big { margin-left: 6px; }
.draw .stack { margin-left: 5px; }

/* document tabs */
.docbar {
  display: flex;
  flex: none;
  height: 22px;
  border-bottom: 1px solid #cdcdcd;
  background: #efefef;
}
.recent { width: 22px; }
.doc {
  display: flex;
  align-items: center;
  gap: 6px;
  padding: 0 6px 1px 3px;
  border: solid #cdcdcd;
  border-width: 0 1px;
  border-top: 1px solid #d8846c;
  background: #fff;
}
.doc span { margin: 0 -1px 0 -2px; }
.doc .more { margin-left: 3px; }
.add { width: 24px; border-right: 1px solid #cdcdcd; }

/* workspace */
.work { display: flex; flex: 1; min-height: 0; }
.thumbs { width: 84px; padding-top: 8px; border-right: 1px solid #bcbcbc; }
.thumb { gap: 12px; width: 100%; height: 38px; justify-content: flex-start; padding-left: 8px; }
.thumb + .thumb { height: 39px; }
.thumb span { align-self: flex-start; padding-top: 5px; font-size: 14px; }
.thumb svg { width: 35px; height: 21px; margin-left: 1px; border: 1px solid #bcbcbc; }
.cur span { color: #c0472c; }
.thumb.cur { gap: 10px; }
.cur svg { width: 41px; height: 27px; margin: 0; border: 3px solid #a33a22; }
.canvas { position: relative; flex: 1; overflow: hidden; background: linear-gradient(100deg, #e1e1e1, #dcdcdc 40%); }
.slide {
  position: absolute;
  inset: 63px 0 0 229px;
  border: solid #bdbdbd;
  border-width: 1px 0 0 1px;
  background: #fefefe;
}
.guide-v {
  position: absolute;
  top: 0;
  bottom: 0;
  left: 787px;
  width: 1px;
  background: repeating-linear-gradient(#a4a4a4 0 3px, transparent 3px 5px);
}
.guide-h {
  position: absolute;
  top: 378px;
  left: 2px;
  right: 0;
  height: 1px;
  background: repeating-linear-gradient(90deg, #a4a4a4 0 3px, transparent 3px 5px);
}
.bar {
  position: absolute;
  top: 374px;
  left: 425px;
  width: 725px;
  height: 9px;
  border: 1px solid #2f5597;
  background: repeating-linear-gradient(90deg, #a9bee2 0 3px, transparent 3px 5px) 0 3px / 100% 1px no-repeat #3765b8;
}
.shape { position: absolute; top: 132px; left: 909px; overflow: visible; }
.plus { position: absolute; top: 133px; left: 1120px; width: 26px; height: 26px; border: 1px solid #c8c8c8; background: #fff; }
```
